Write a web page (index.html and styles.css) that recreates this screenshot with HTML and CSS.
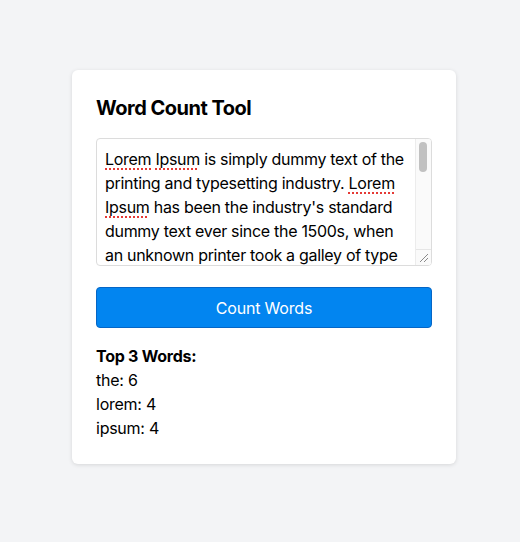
FILE: index.html
```html
<!DOCTYPE html>
<html lang="en">
<head>
<meta charset="utf-8">
<title>Word Count Tool</title>
<link rel="stylesheet" href="styles.css">
</head>
<body>
<main class="card">
  <h1 class="title">Word Count Tool</h1>
  <div class="editor-wrap">
    <div class="editor" contenteditable="true" role="textbox" aria-multiline="true" spellcheck="true"><span class="misspelled">Lorem</span> <span class="misspelled">Ipsum</span> is simply dummy text of the printing and typesetting industry. <span class="misspelled">Lorem</span> <span class="misspelled">Ipsum</span> has been the industry's standard dummy text ever since the 1500s, when an unknown printer took a galley of type and scrambled it to make a type specimen book. It has survived not only five centuries, but also the leap into electronic typesetting, remaining essentially unchanged.</div>
    <div class="scrollbar" aria-hidden="true">
      <div class="thumb"></div>
      <div class="resizer">
        <svg width="14" height="14" viewBox="0 0 14 14"><path d="M4 12 L12 4 M8 12 L12 8" stroke="#8a8a8a" stroke-width="1" fill="none"/></svg>
      </div>
    </div>
  </div>
  <button class="btn" type="button">Count Words</button>
  <section class="results">
    <p class="results-title">Top 3 Words:</p>
    <p class="result-row">the: 6</p>
    <p class="result-row">lorem: 4</p>
    <p class="result-row">ipsum: 4</p>
  </section>
</main>
</body>
</html>
```
FILE: styles.css
```css
* { box-sizing: border-box; }
html, body { margin: 0; }
body {
  background: #f3f4f6;
  font-family: Inter, "Noto Sans", sans-serif;
  color: #000;
  display: flex;
  justify-content: center;
  padding: 70px 0 0 8px;
  min-height: 542px;
}
.card {
  width: 384px;
  height: 394px;
  background: #fff;
  border-radius: 6px;
  box-shadow: 0 1px 4px rgba(0,0,0,0.12);
  padding: 24px;
}
.title {
  margin: 0 0 16px;
  font-size: 20px;
  line-height: 28px;
  font-weight: 700;
  letter-spacing: -0.5px;
}
.editor-wrap {
  position: relative;
  height: 128px;
  border: 1px solid #dcdcdc;
  border-radius: 4px;
  overflow: hidden;
}
.editor {
  height: 100%;
  padding: 8px 22px 8px 8px;
  font-size: 16px;
  line-height: 24px;
  letter-spacing: -0.3px;
  overflow: hidden;
  outline: none;
}
.scrollbar {
  position: absolute;
  top: 0;
  right: 0;
  bottom: 0;
  width: 16px;
  background: #fafafa;
  border-left: 1px solid #ececec;
}
.thumb {
  position: absolute;
  top: 3px;
  left: 3px;
  width: 8px;
  height: 30px;
  border-radius: 4px;
  background: #c1c1c1;
}
.resizer {
  position: absolute;
  left: 0;
  right: 0;
  bottom: 0;
  height: 16px;
  border-top: 1px solid #e6e6e6;
  background: #fafafa;
}
.resizer svg { display: block; }
.misspelled {
  text-decoration: underline dotted #e53935;
  text-decoration-thickness: 1.5px;
  text-underline-offset: 3px;
}
.btn {
  display: block;
  width: 100%;
  margin-top: 21px;
  padding: 8px 12px 7px;
  font: inherit;
  font-size: 16px;
  line-height: 24px;
  letter-spacing: -0.2px;
  color: #fff;
  background: #0285f0;
  border: 1px solid #0566c6;
  border-radius: 4px;
}
.results { margin-top: 16px; }
.results p {
  margin: 0;
  font-size: 16px;
  line-height: 24px;
  letter-spacing: -0.25px;
}
.results-title { font-weight: 700; }
```
